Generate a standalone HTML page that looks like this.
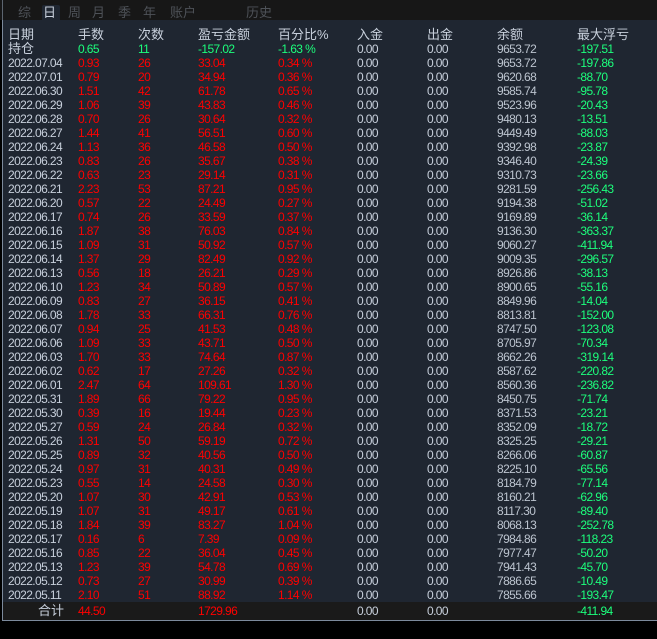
<!DOCTYPE html>
<html><head><meta charset="utf-8"><style>
*{margin:0;padding:0;box-sizing:border-box}
body{width:657px;height:639px;background:#000;overflow:hidden;position:relative;font-family:"Liberation Sans","Noto Sans CJK SC",sans-serif}
#top{position:absolute;left:0;top:0;width:657px;height:20px;background:#171717}
.tab{position:absolute;top:6px;font-size:13px;line-height:14px;color:#4e5258}
#act{position:absolute;left:42px;top:5px;width:18px;height:15px;background:#1f2631;border-radius:2px 2px 0 0}
#main{position:absolute;left:2px;top:20px;width:655px;height:601px;background:#1f2631;border-left:1px solid #7c8a9c;border-bottom:1px solid #7c8a9c}
#lb{position:absolute;left:2px;top:0;width:1px;height:20px;background:#5c6570}
.r{position:absolute;left:0;height:14px;width:657px;font-size:12px;line-height:14px;letter-spacing:-0.6px;color:#c8d0dc;white-space:nowrap}
.r span{position:absolute;top:0}
.h{font-size:13px;letter-spacing:0}
.c1{left:8px}.c2{left:78px}.c3{left:138px}.c4{left:198px}.c5{left:278px}.c6{left:357px}.c7{left:427px}.c8{left:497px;color:#bcc4cf}.c9{left:577px;color:#1cff7c}
.rd .c2,.rd .c3,.rd .c4,.rd .c5{color:#ff0000}
.g{color:#1cff7c}
#tot{position:absolute;left:3px;top:602px;width:654px;height:18px;background:#1a1a1a}
</style></head><body>
<div id="top"></div>
<div id="lb"></div>
<div id="act"></div>
<div class="tab" style="left:18px">综</div>
<div class="tab" style="left:43px;color:#c8d0dc">日</div>
<div class="tab" style="left:68px">周</div>
<div class="tab" style="left:92px">月</div>
<div class="tab" style="left:118px">季</div>
<div class="tab" style="left:143px">年</div>
<div class="tab" style="left:170px">账户</div>
<div class="tab" style="left:246px">历史</div>
<div id="main"></div>
<div id="tot"></div>
<div id="rows"></div>
<script>
var d=[["07.04","0.93","26","33.04","0.34","9653.72","-197.86"],
["07.01","0.79","20","34.94","0.36","9620.68","-88.70"],
["06.30","1.51","42","61.78","0.65","9585.74","-95.78"],
["06.29","1.06","39","43.83","0.46","9523.96","-20.43"],
["06.28","0.70","26","30.64","0.32","9480.13","-13.51"],
["06.27","1.44","41","56.51","0.60","9449.49","-88.03"],
["06.24","1.13","36","46.58","0.50","9392.98","-23.87"],
["06.23","0.83","26","35.67","0.38","9346.40","-24.39"],
["06.22","0.63","23","29.14","0.31","9310.73","-23.66"],
["06.21","2.23","53","87.21","0.95","9281.59","-256.43"],
["06.20","0.57","22","24.49","0.27","9194.38","-51.02"],
["06.17","0.74","26","33.59","0.37","9169.89","-36.14"],
["06.16","1.87","38","76.03","0.84","9136.30","-363.37"],
["06.15","1.09","31","50.92","0.57","9060.27","-411.94"],
["06.14","1.37","29","82.49","0.92","9009.35","-296.57"],
["06.13","0.56","18","26.21","0.29","8926.86","-38.13"],
["06.10","1.23","34","50.89","0.57","8900.65","-55.16"],
["06.09","0.83","27","36.15","0.41","8849.96","-14.04"],
["06.08","1.78","33","66.31","0.76","8813.81","-152.00"],
["06.07","0.94","25","41.53","0.48","8747.50","-123.08"],
["06.06","1.09","33","43.71","0.50","8705.97","-70.34"],
["06.03","1.70","33","74.64","0.87","8662.26","-319.14"],
["06.02","0.62","17","27.26","0.32","8587.62","-220.82"],
["06.01","2.47","64","109.61","1.30","8560.36","-236.82"],
["05.31","1.89","66","79.22","0.95","8450.75","-71.74"],
["05.30","0.39","16","19.44","0.23","8371.53","-23.21"],
["05.27","0.59","24","26.84","0.32","8352.09","-18.72"],
["05.26","1.31","50","59.19","0.72","8325.25","-29.21"],
["05.25","0.89","32","40.56","0.50","8266.06","-60.87"],
["05.24","0.97","31","40.31","0.49","8225.10","-65.56"],
["05.23","0.55","14","24.58","0.30","8184.79","-77.14"],
["05.20","1.07","30","42.91","0.53","8160.21","-62.96"],
["05.19","1.07","31","49.17","0.61","8117.30","-89.40"],
["05.18","1.84","39","83.27","1.04","8068.13","-252.78"],
["05.17","0.16","6","7.39","0.09","7984.86","-118.23"],
["05.16","0.85","22","36.04","0.45","7977.47","-50.20"],
["05.13","1.23","39","54.78","0.69","7941.43","-45.70"],
["05.12","0.73","27","30.99","0.39","7886.65","-10.49"],
["05.11","2.10","51","88.92","1.14","7855.66","-193.47"]];
var h='<div class="r h" style="top:28px"><span class="c1">日期</span><span class="c2">手数</span><span class="c3">次数</span><span class="c4">盈亏金额</span><span class="c5">百分比%</span><span class="c6">入金</span><span class="c7">出金</span><span class="c8" style="color:#c8d0dc">余额</span><span class="c9" style="color:#c8d0dc">最大浮亏</span></div>';
h+='<div class="r" style="top:42px"><span class="c1" style="font-size:13px;letter-spacing:0">持仓</span><span class="c2 g">0.65</span><span class="c3 g">11</span><span class="c4 g">-157.02</span><span class="c5 g">-1.63 %</span><span class="c6">0.00</span><span class="c7">0.00</span><span class="c8">9653.72</span><span class="c9">-197.51</span></div>';
for(var i=0;i<d.length;i++){var r=d[i];
h+='<div class="r rd" style="top:'+(56+i*14)+'px"><span class="c1">2022.'+r[0]+'</span><span class="c2">'+r[1]+'</span><span class="c3">'+r[2]+'</span><span class="c4">'+r[3]+'</span><span class="c5">'+r[4]+' %</span><span class="c6">0.00</span><span class="c7">0.00</span><span class="c8">'+r[5]+'</span><span class="c9">'+r[6]+'</span></div>';}
h+='<div class="r rd" style="top:604px"><span style="left:38px;font-size:13px;letter-spacing:0">合计</span><span class="c2">44.50</span><span class="c4">1729.96</span><span class="c6">0.00</span><span class="c7">0.00</span><span class="c9">-411.94</span></div>';
document.getElementById('rows').innerHTML=h;
</script>
</body></html>
